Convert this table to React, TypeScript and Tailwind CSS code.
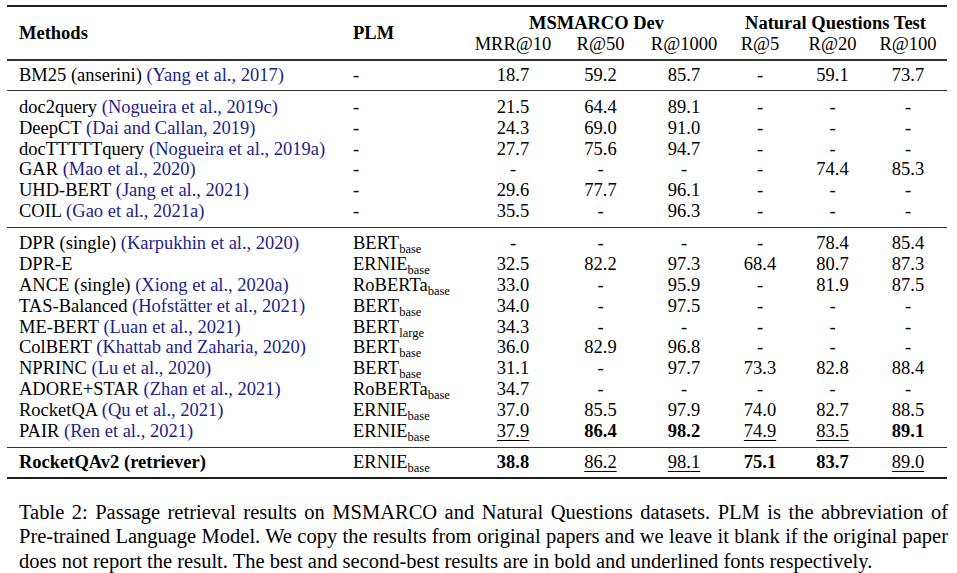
type Cell = string | { v: string; b?: boolean; u?: boolean }

interface Row {
  name: string
  cite?: string
  plm?: [string, string]
  vals: Cell[]
  bold?: boolean
}

const GRID = 'grid grid-cols-[346px_116px_88px_87px_80px_72px_73px_78px]'

const bm25: Row[] = [
  { name: 'BM25 (anserini)', cite: 'Yang et al., 2017', vals: ['18.7', '59.2', '85.7', '-', '59.1', '73.7'] },
]

const sparse: Row[] = [
  { name: 'doc2query', cite: 'Nogueira et al., 2019c', vals: ['21.5', '64.4', '89.1', '-', '-', '-'] },
  { name: 'DeepCT', cite: 'Dai and Callan, 2019', vals: ['24.3', '69.0', '91.0', '-', '-', '-'] },
  { name: 'docTTTTTquery', cite: 'Nogueira et al., 2019a', vals: ['27.7', '75.6', '94.7', '-', '-', '-'] },
  { name: 'GAR', cite: 'Mao et al., 2020', vals: ['-', '-', '-', '-', '74.4', '85.3'] },
  { name: 'UHD-BERT', cite: 'Jang et al., 2021', vals: ['29.6', '77.7', '96.1', '-', '-', '-'] },
  { name: 'COIL', cite: 'Gao et al., 2021a', vals: ['35.5', '-', '96.3', '-', '-', '-'] },
]

const dense: Row[] = [
  { name: 'DPR (single)', cite: 'Karpukhin et al., 2020', plm: ['BERT', 'base'], vals: ['-', '-', '-', '-', '78.4', '85.4'] },
  { name: 'DPR-E', plm: ['ERNIE', 'base'], vals: ['32.5', '82.2', '97.3', '68.4', '80.7', '87.3'] },
  { name: 'ANCE (single)', cite: 'Xiong et al., 2020a', plm: ['RoBERTa', 'base'], vals: ['33.0', '-', '95.9', '-', '81.9', '87.5'] },
  { name: 'TAS-Balanced', cite: 'Hofstätter et al., 2021', plm: ['BERT', 'base'], vals: ['34.0', '-', '97.5', '-', '-', '-'] },
  { name: 'ME-BERT', cite: 'Luan et al., 2021', plm: ['BERT', 'large'], vals: ['34.3', '-', '-', '-', '-', '-'] },
  { name: 'ColBERT', cite: 'Khattab and Zaharia, 2020', plm: ['BERT', 'base'], vals: ['36.0', '82.9', '96.8', '-', '-', '-'] },
  { name: 'NPRINC', cite: 'Lu et al., 2020', plm: ['BERT', 'base'], vals: ['31.1', '-', '97.7', '73.3', '82.8', '88.4'] },
  { name: 'ADORE+STAR', cite: 'Zhan et al., 2021', plm: ['RoBERTa', 'base'], vals: ['34.7', '-', '-', '-', '-', '-'] },
  { name: 'RocketQA', cite: 'Qu et al., 2021', plm: ['ERNIE', 'base'], vals: ['37.0', '85.5', '97.9', '74.0', '82.7', '88.5'] },
  {
    name: 'PAIR',
    cite: 'Ren et al., 2021',
    plm: ['ERNIE', 'base'],
    vals: [{ v: '37.9', u: true }, { v: '86.4', b: true }, { v: '98.2', b: true }, { v: '74.9', u: true }, { v: '83.5', u: true }, { v: '89.1', b: true }],
  },
]

const ours: Row[] = [
  {
    name: 'RocketQAv2 (retriever)',
    bold: true,
    plm: ['ERNIE', 'base'],
    vals: [{ v: '38.8', b: true }, { v: '86.2', u: true }, { v: '98.1', u: true }, { v: '75.1', b: true }, { v: '83.7', b: true }, { v: '89.0', u: true }],
  },
]

function Value({ cell }: { cell: Cell }) {
  const c = typeof cell === 'string' ? { v: cell } : cell
  return (
    <div className="text-center">
      <span
        className={
          (c.b ? 'font-bold ' : '') + (c.u ? 'underline decoration-1 underline-offset-[3px]' : '')
        }
      >
        {c.v}
      </span>
    </div>
  )
}

function TableRow({ row }: { row: Row }) {
  return (
    <div className={`${GRID} h-[20.8px] items-center leading-[20.8px]`}>
      <div className="pl-3 whitespace-nowrap">
        <span className={row.bold ? 'font-bold' : ''}>{row.name}</span>
        {row.cite && (
          <>
            {' '}
            <span className="text-[#1d1d8e]">({row.cite})</span>
          </>
        )}
      </div>
      <div className="whitespace-nowrap">
        {row.plm ? (
          <>
            {row.plm[0]}
            <span className="relative top-[4px] inline-block text-[12.5px] leading-[10px]">{row.plm[1]}</span>
          </>
        ) : (
          '-'
        )}
      </div>
      {row.vals.map((v, i) => (
        <Value key={i} cell={v} />
      ))}
    </div>
  )
}

function Section({ rows, className }: { rows: Row[]; className: string }) {
  return (
    <div className={className}>
      {rows.map((r) => (
        <TableRow key={r.name} row={r} />
      ))}
    </div>
  )
}

function Rule() {
  return <div className="h-[1.5px] bg-[#333]" />
}

export default function App() {
  return (
    <div className="h-[573px] w-[957px] overflow-hidden bg-white font-['Liberation_Serif',serif] text-[18.5px] text-black">
      <div className="ml-[7px] w-[940px] pt-[5px]">
        <div className="h-[2px] bg-[#1e1e1e]" />
        <div className={`${GRID} grid-rows-[21px_21px] pt-[5.5px] pb-[4.5px] leading-[21px]`}>
          <div className="row-span-2 self-center pl-3 font-bold">Methods</div>
          <div className="row-span-2 self-center font-bold">PLM</div>
          <div className="col-span-3 text-center font-bold">MSMARCO Dev</div>
          <div className="col-span-3 text-center font-bold">Natural Questions Test</div>
          <div className="text-center">MRR@10</div>
          <div className="text-center">R@50</div>
          <div className="text-center">R@1000</div>
          <div className="text-center">R@5</div>
          <div className="text-center">R@20</div>
          <div className="text-center">R@100</div>
        </div>
        <Rule />
        <Section rows={bm25} className="pt-[4.5px] pb-[4.2px]" />
        <Rule />
        <Section rows={sparse} className="pt-[5.5px] pb-[5.2px]" />
        <Rule />
        <Section rows={dense} className="pt-[5px] pb-[5.5px]" />
        <Rule />
        <Section rows={ours} className="pt-[4px] pb-[3.7px]" />
        <div className="h-[2px] bg-[#1e1e1e]" />
      </div>
      <div className="mt-[21px] ml-[19px] w-[929px] text-[20.5px] leading-[24.5px]">
        <div className="whitespace-nowrap text-justify [text-align-last:justify] [word-spacing:-2px]">
          Table 2: Passage retrieval results on MSMARCO and Natural Questions datasets. PLM is the abbreviation of
        </div>
        <div className="whitespace-nowrap text-justify [text-align-last:justify] [word-spacing:-2px]">
          Pre-trained Language Model. We copy the results from original papers and we leave it blank if the original paper
        </div>
        <div className="whitespace-nowrap">
          does not report the result. The best and second-best results are in bold and underlined fonts respectively.
        </div>
      </div>
    </div>
  )
}
